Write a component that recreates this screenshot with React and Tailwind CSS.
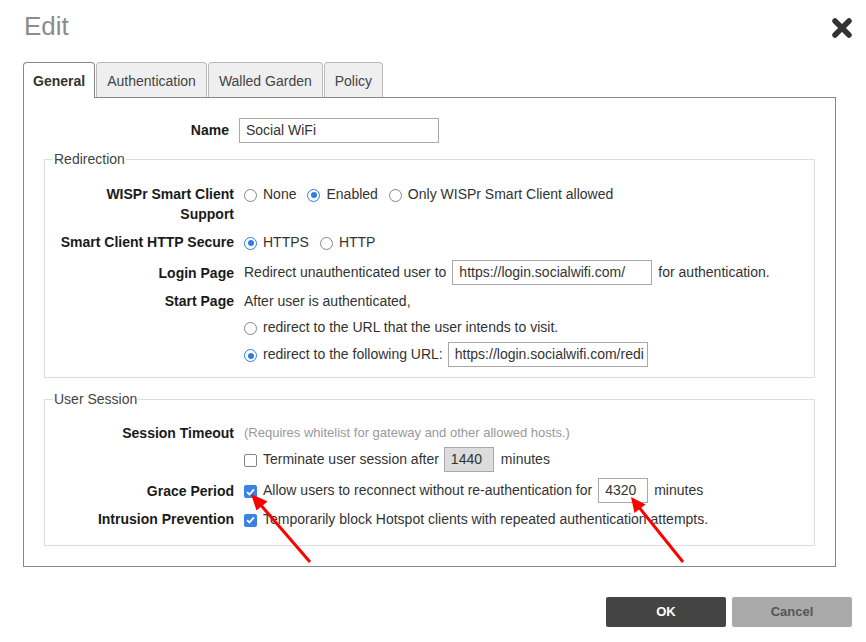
import React from 'react';

function Radio({ checked }) {
  return checked ? (
    <span className="inline-flex h-[13px] w-[13px] shrink-0 translate-y-[1px] items-center justify-center rounded-full border-[1.5px] border-[#2f7de1] bg-white">
      <span className="h-[6px] w-[6px] rounded-full bg-[#2f7de1]" />
    </span>
  ) : (
    <span className="inline-block h-[13px] w-[13px] shrink-0 translate-y-[1px] rounded-full border-[1.5px] border-[#858585] bg-white" />
  );
}

function Check({ checked }) {
  return checked ? (
    <span className="inline-flex h-[13px] w-[13px] shrink-0 translate-y-[1px] items-center justify-center rounded-[2px] bg-[#3a82e4]">
      <svg width="9" height="8" viewBox="0 0 9 8">
        <path d="M1 4.2 L3.4 6.5 L8 1.3" fill="none" stroke="#fff" strokeWidth="1.8" />
      </svg>
    </span>
  ) : (
    <span className="inline-block h-[13px] w-[13px] shrink-0 translate-y-[1px] rounded-[2px] border-[1.5px] border-[#858585] bg-white" />
  );
}

function TextBox({ value, w = 'w-[200px]', gray }) {
  return (
    <div
      className={`${w} h-[25px] shrink-0 border ${gray ? 'border-[#a8a8a8] bg-[#dcdcdc]' : 'border-[#a8a8a8] bg-white'} flex items-center overflow-hidden whitespace-nowrap px-[6px] text-[14px] text-[#333]`}
    >
      {value}
    </div>
  );
}

function Label({ children }) {
  return (
    <div className="w-[180px] shrink-0 text-right text-[14px] font-bold leading-[20px] text-[#1a1a1a]">{children}</div>
  );
}

export default function App() {
  const tabs = ['General', 'Authentication', 'Walled Garden', 'Policy'];

  return (
    <div className="relative h-[642px] w-[866px] overflow-hidden bg-white font-['Liberation_Sans',Arial,sans-serif] text-[14px] text-[#333]">
      {/* header */}
      <div className="flex items-start justify-between pl-[24px] pr-[14px] pt-[11px]">
        <h1 className="text-[26px] leading-[30px] text-[#8c8c8c]">Edit</h1>
        <svg width="20" height="20" viewBox="0 0 20 20" className="mt-[7px]">
          <path d="M3 3 L17 17 M17 3 L3 17" stroke="#333" strokeWidth="5.5" strokeLinecap="round" />
        </svg>
      </div>

      {/* tabs */}
      <div className="relative z-10 ml-[23px] mt-[21px] flex gap-px">
        {tabs.map((t, i) =>
          i === 0 ? (
            <div
              key={t}
              className="h-[36px] rounded-t-[4px] border border-b-0 border-[#888] bg-white px-[9px] pt-[8px] text-[14px] font-bold text-[#333]"
            >
              {t}
            </div>
          ) : (
            <div
              key={t}
              className="h-[35px] rounded-t-[4px] border border-b-0 border-[#bbb] bg-[#efefef] px-[10px] pt-[8px] text-[14px] text-[#444]"
            >
              {t}
            </div>
          )
        )}
      </div>

      {/* panel */}
      <div className="mx-[23px] -mt-px w-[813px] border border-[#888] px-[20px] pb-[20px] pt-[20px]">
        <div className="flex items-center">
          <div className="w-[185px] text-right font-bold text-[#1a1a1a]">Name</div>
          <div className="ml-[10px]">
            <TextBox value="Social WiFi" />
          </div>
        </div>

        <fieldset className="mt-[6px] border border-[#ddd] pb-[10px] pl-[9px] pt-[15px]">
          <legend className="-ml-px px-[1px] leading-[20px] text-[#444]">Redirection</legend>

          <div className="flex items-start">
            <Label>
              WISPr Smart Client
              <br />
              Support
            </Label>
            <div className="ml-[10px] flex h-[20px] items-center">
              <Radio />
              <span className="ml-[6px]">None</span>
              <span className="ml-[11px] flex"><Radio checked /></span>
              <span className="ml-[6px]">Enabled</span>
              <span className="ml-[11px] flex"><Radio /></span>
              <span className="ml-[6px]">Only WISPr Smart Client allowed</span>
            </div>
          </div>

          <div className="mt-[8px] flex items-center">
            <Label>Smart Client HTTP Secure</Label>
            <div className="ml-[10px] flex h-[20px] items-center">
              <Radio checked />
              <span className="ml-[6px]">HTTPS</span>
              <span className="ml-[11px] flex"><Radio /></span>
              <span className="ml-[6px]">HTTP</span>
            </div>
          </div>

          <div className="mt-[8px] flex items-center">
            <Label>Login Page</Label>
            <div className="ml-[10px] flex items-center">
              <span>Redirect unauthenticated user to</span>
              <span className="ml-[6px]"><TextBox value="https://login.socialwifi.com/" /></span>
              <span className="ml-[6px]">for authentication.</span>
            </div>
          </div>

          <div className="mt-[6px] flex items-start">
            <Label>Start Page</Label>
            <div className="ml-[10px] flex flex-col">
              <div className="leading-[20px]">After user is authenticated,</div>
              <div className="mt-[6px] flex h-[20px] items-center">
                <Radio />
                <span className="ml-[6px]">redirect to the URL that the user intends to visit.</span>
              </div>
              <div className="mt-[5px] flex items-center">
                <Radio checked />
                <span className="ml-[6px]">redirect to the following URL:</span>
                <span className="ml-[5px]"><TextBox value="https://login.socialwifi.com/redi" /></span>
              </div>
            </div>
          </div>
        </fieldset>

        <fieldset className="mt-[11px] border border-[#ddd] pb-[16px] pl-[9px] pt-[14px]">
          <legend className="-ml-px px-[1px] leading-[20px] text-[#444]">User Session</legend>

          <div className="flex items-start">
            <Label>Session Timeout</Label>
            <div className="ml-[10px] flex flex-col">
              <div className="text-[13px] leading-[20px] text-[#999]">
                (Requires whitelist for gateway and other allowed hosts.)
              </div>
              <div className="mt-[4px] flex items-center">
                <Check />
                <span className="ml-[6px]">Terminate user session after</span>
                <span className="ml-[5px]"><TextBox value="1440" w="w-[50px]" gray /></span>
                <span className="ml-[7px]">minutes</span>
              </div>
            </div>
          </div>

          <div className="mt-[6px] flex items-center">
            <Label>Grace Period</Label>
            <div className="ml-[10px] flex items-center">
              <Check checked />
              <span className="ml-[6px]">Allow users to reconnect without re-authentication for</span>
              <span className="ml-[6px]"><TextBox value="4320" w="w-[50px]" /></span>
              <span className="ml-[6px]">minutes</span>
            </div>
          </div>

          <div className="mt-[6px] flex items-center">
            <Label>Intrusion Prevention</Label>
            <div className="ml-[10px] flex h-[20px] items-center">
              <Check checked />
              <span className="ml-[6px]">Temporarily block Hotspot clients with repeated authentication attempts.</span>
            </div>
          </div>
        </fieldset>
      </div>

      {/* footer */}
      <div className="mt-[30px] flex justify-end gap-[6px] pr-[14px]">
        <button className="h-[30px] w-[120px] rounded-[2px] bg-[#444] text-[13px] font-bold text-white">OK</button>
        <button className="h-[30px] w-[120px] rounded-[2px] bg-[#aaa] text-[13px] font-bold text-[#555]">Cancel</button>
      </div>

      {/* annotation arrows */}
      <svg className="pointer-events-none absolute left-0 top-0" width="866" height="642" viewBox="0 0 866 642">
        <line x1="310" y1="562" x2="259" y2="503" stroke="#f00" strokeWidth="3" />
        <polygon points="251,494 267.5,501.5 256.5,510.5" fill="#f00" />
        <line x1="683" y1="562" x2="638" y2="506" stroke="#f00" strokeWidth="3" />
        <polygon points="631,497 645.5,504.5 634.5,513" fill="#f00" />
      </svg>
    </div>
  );
}
